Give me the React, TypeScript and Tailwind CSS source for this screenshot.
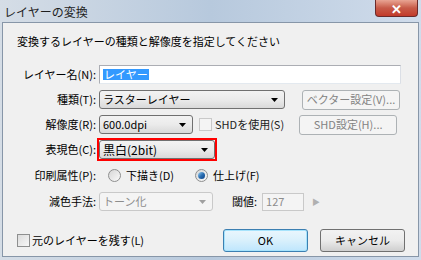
const FONT = "font-['MS_UI_Gothic','Noto_Sans_CJK_JP',sans-serif]"

const Arrow = ({ dim }: { dim?: boolean }) => (
  <svg width="7" height="4" viewBox="0 0 7 4">
    <path d="M0 0h7L3.5 4Z" fill={dim ? '#a0a0a0' : '#000'} />
  </svg>
)

function Combo({ value, w, dim, red }: { value: string; w: string; dim?: boolean; red?: boolean }) {
  const inner = (
    <div
      className={`flex h-[19px] items-center justify-between rounded-[3px] border pl-[3px] pr-[6px] ${w} ${
        dim
          ? 'border-[#c9c9c9] bg-[#f4f4f4] text-[#8d8d8d]'
          : 'border-[#707070] bg-gradient-to-b from-[#f3f3f3] via-[#ebebeb] to-[#d9d9d9] text-black'
      }`}
    >
      <span className={red ? 'text-[12px]' : ''}>{value}</span>
      <Arrow dim={dim} />
    </div>
  )
  if (!red) return inner
  return <div className="border-2 border-[#ff0000]">{inner}</div>
}

function Btn({ label, w, disabled, primary }: { label: string; w: string; disabled?: boolean; primary?: boolean }) {
  return (
    <div
      className={`flex items-center justify-center rounded-[3px] border ${w} ${
        disabled
          ? 'h-[20px] border-[#adb2b5] bg-[#f4f4f4] text-[#838383]'
          : primary
            ? 'h-[23px] border-[#3c7fb1] bg-gradient-to-b from-[#eaf6fd] via-[#d9f0fc] to-[#bee6fd] text-black shadow-[inset_0_0_0_1px_#a6e3fc]'
            : 'h-[23px] border-[#707070] bg-gradient-to-b from-[#f2f2f2] via-[#ebebeb] to-[#cfcfcf] text-black'
      }`}
    >
      {label}
    </div>
  )
}

function Radio({ checked }: { checked?: boolean }) {
  return (
    <span className="flex h-[13px] w-[13px] items-center justify-center rounded-full border border-[#8e8f8f] bg-gradient-to-br from-[#d6d6d6] to-[#fafafa]">
      {checked && <span className="h-[7px] w-[7px] rounded-full bg-gradient-to-br from-[#9ed5f5] via-[#2b6fb2] to-[#0d3f85]" />}
    </span>
  )
}

function Check() {
  return <span className="h-[13px] w-[13px] border border-[#8e8f8f] bg-gradient-to-br from-[#dcdcdc] to-[#f7f7f7]" />
}

function Row({ label, children, h = 'h-[25px]' }: { label: string; children: React.ReactNode; h?: string }) {
  return (
    <div className={`flex items-center ${h}`}>
      <div className="w-[80px] shrink-0 pr-[1px] text-right">{label}</div>
      <div className="ml-[2px] flex items-center">{children}</div>
    </div>
  )
}

export default function App() {
  return (
    <div className={`flex h-[260px] w-[421px] flex-col whitespace-nowrap bg-gradient-to-r from-[#d5dde6] via-[#b7c9dd] to-[#d0dceb] text-[11px] leading-none text-black ${FONT}`}>
      <div className="flex h-[22px] shrink-0 items-start justify-between pl-[4px]">
        <span className="pt-[6px] text-[12px] text-[#1e1e1e]">レイヤーの変換</span>
        <div className="mr-[3px] flex h-[17px] w-[43px] items-center justify-center rounded-b-[4px] border border-t-0 border-[#6b2a2a] bg-gradient-to-b from-[#e8a493] via-[#c75a48] to-[#c23a2a] text-[13px] font-bold text-white">
          ✕
        </div>
      </div>
      <div className="mx-[2px] mb-[3px] flex flex-1 flex-col border border-[#8796a8] bg-[#f0f0f0] pl-[14px]">
        <div className="pt-[13px]">変換するレイヤーの種類と解像度を指定してください</div>
        <div className="mt-[15px] flex flex-col">
          <Row label="レイヤー名(N):">
            <div className="flex h-[19px] w-[302px] items-center border border-[#abadb3] border-b-[#e3e9ef] border-r-[#dbdfe6] bg-white pl-[3px]">
              <span className="bg-[#3399ff] px-[1px] text-white">レイヤー</span>
            </div>
          </Row>
          <Row label="種類(T):">
            <Combo value="ラスターレイヤー" w="w-[186px]" />
            <div className="ml-[17px]"><Btn label="ベクター設定(V)..." w="w-[98px]" disabled /></div>
          </Row>
          <Row label="解像度(R):">
            <Combo value="600.0dpi" w="w-[94px]" />
            <div className="ml-[6px] flex items-center gap-[3px]">
              <span className="h-[13px] w-[13px] border border-[#c9c9c9] bg-[#f4f4f4]" />
              <span className="text-[#222]">SHDを使用(S)</span>
            </div>
            <div className="ml-[15px]"><Btn label="SHD設定(H)..." w="w-[98px]" disabled /></div>
          </Row>
          <Row label="表現色(C):">
            <div className="-ml-[2px]"><Combo value="黒白(2bit)" w="w-[116px]" red /></div>
          </Row>
          <Row label="印刷属性(P):" h="h-[27px]">
            <div className="ml-[9px] flex items-center gap-[5px]"><Radio /><span>下描き(D)</span></div>
            <div className="ml-[21px] flex items-center gap-[5px]"><Radio checked /><span>仕上げ(F)</span></div>
          </Row>
          <Row label="減色手法:">
            <Combo value="トーン化" w="w-[114px]" dim />
            <span className="ml-[19px]">閾値:</span>
            <div className="ml-[5px] flex h-[18px] w-[42px] items-center border border-[#c9c9c9] bg-[#f4f4f4] pl-[3px] text-[#8d8d8d]">127</div>
            <span className="ml-[8px] text-[8px] text-[#b0b0b0]">▶</span>
          </Row>
        </div>
        <div className="mt-[15px] flex items-center">
          <div className="flex items-center gap-[2px]">
            <Check />
            <span>元のレイヤーを残す(L)</span>
          </div>
          <div className="ml-auto mr-[13px] flex gap-[12px]">
            <Btn label="OK" w="w-[85px]" primary />
            <Btn label="キャンセル" w="w-[85px]" />
          </div>
        </div>
      </div>
    </div>
  )
}
